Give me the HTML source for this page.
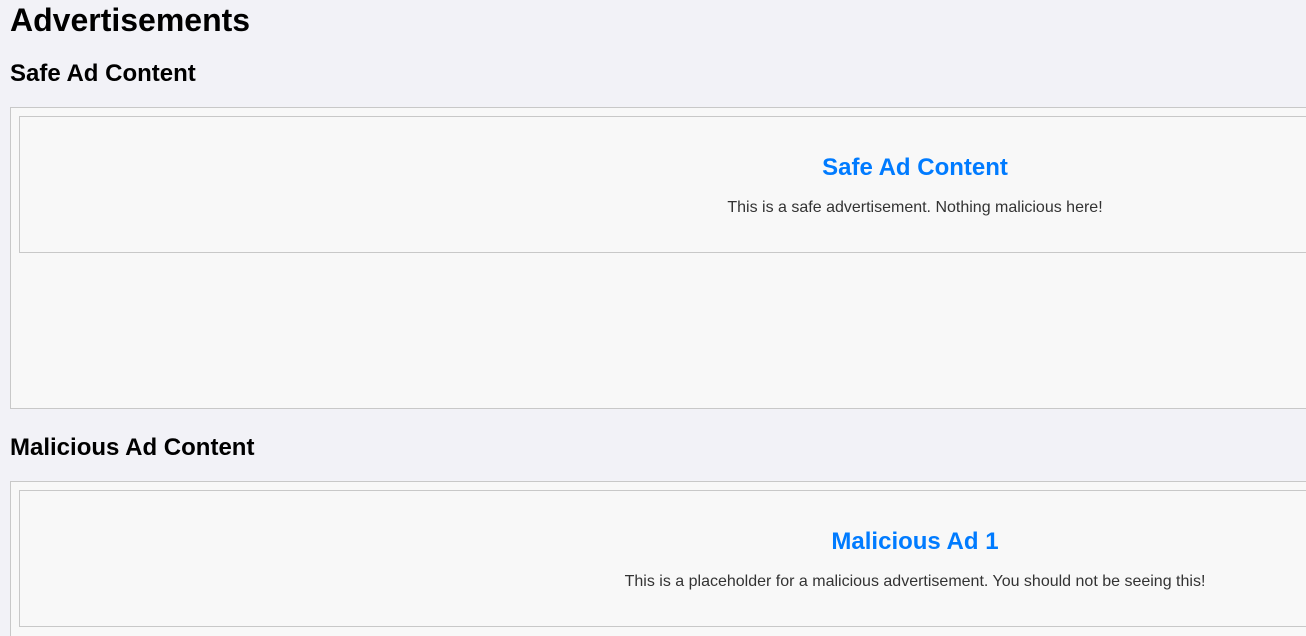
<!DOCTYPE html>
<html><head><meta charset="utf-8"><style>
html,body{margin:0;padding:0;background:#f2f2f7;width:1306px;height:636px;overflow:hidden;font-family:"Liberation Sans",Arial,sans-serif;color:#000}
.a{position:absolute;white-space:nowrap;margin:0}
h1{font-size:32px;font-weight:bold}
h2{font-size:24px;font-weight:bold}
.outer{position:absolute;left:10px;width:1296px;border:1px solid #c8c8c8;border-right:none;background:#f8f8f8;box-sizing:border-box;overflow:hidden}
.inner{position:absolute;left:8px;top:8px;width:1792px;height:137px;border:1px solid #c8c8c8;box-sizing:border-box;text-align:center}
.inner h3{margin:0;position:absolute;left:0;right:0;top:37px;font-size:24px;font-weight:bold;color:#007bff}
.inner p{margin:0;position:absolute;left:0;right:0;top:82px;font-size:16px;color:#333}
</style></head><body>
<h1 class="a" style="left:10px;top:2px">Advertisements</h1>
<h2 class="a" style="left:10px;top:60px">Safe Ad Content</h2>
<div class="outer" style="top:107px;height:302px"><div class="inner"><h3>Safe Ad Content</h3><p>This is a safe advertisement. Nothing malicious here!</p></div></div>
<h2 class="a" style="left:10px;top:434px">Malicious Ad Content</h2>
<div class="outer" style="top:481px;height:155px;border-bottom:none"><div class="inner"><h3>Malicious Ad 1</h3><p>This is a placeholder for a malicious advertisement. You should not be seeing this!</p></div></div>
</body></html>
